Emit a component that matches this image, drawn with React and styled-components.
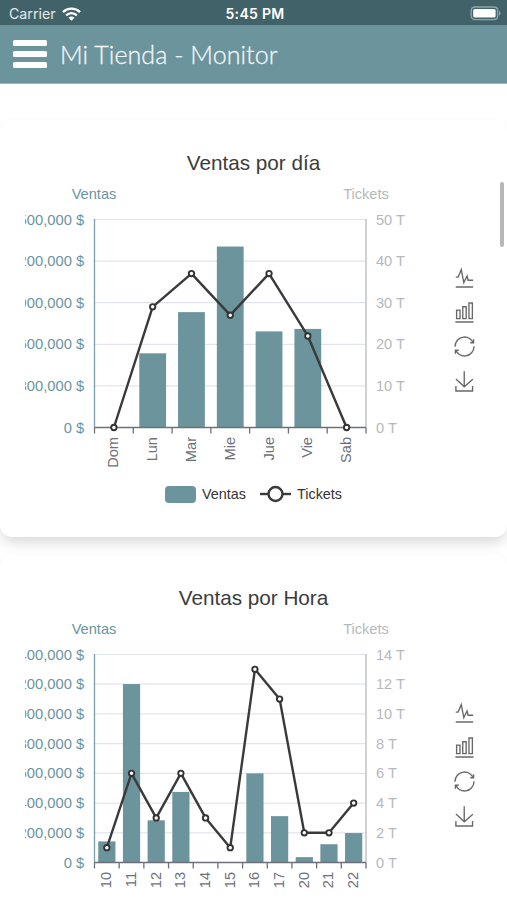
import React from "react";
import styled, { createGlobalStyle } from "styled-components";

const GlobalStyle = createGlobalStyle`
  body {
    margin: 0;
    background: #fff;
    font-family: "Liberation Sans", Arial, sans-serif;
  }
`;

const Screen = styled.div`
  position: relative;
  display: flex;
  flex-direction: column;
  height: 100vh;
  overflow: hidden;
`;

const StatusBar = styled.div`
  display: grid;
  grid-template-columns: 1fr auto 1fr;
  align-items: center;
  flex: none;
  height: 25px;
  padding: 2px 6px 0 9px;
  box-sizing: border-box;
  background: #426269;
  color: #fff;
  font-family: Inter, sans-serif;
  font-size: 14.2px;
`;

const Carrier = styled.span`
  display: flex;
  align-items: center;
  gap: 6px;
  color: #e3eaec;
`;

const Clock = styled.span`
  font-weight: 600;
  font-size: 14px;
  letter-spacing: 0.3px;
`;

const Battery = styled.span`
  justify-self: end;
  display: flex;
`;

const AppBar = styled.header`
  display: flex;
  align-items: center;
  flex: none;
  gap: 13px;
  height: 59px;
  padding: 0 13px 1px;
  box-sizing: border-box;
  background: #6b949d;
  border-bottom: 1px solid #9db8be;
`;

const MenuButton = styled.button`
  display: flex;
  flex-direction: column;
  justify-content: space-between;
  width: 34px;
  height: 28px;
  padding: 0;
  border: 0;
  background: none;
`;

const MenuLine = styled.span`
  height: 6px;
  border-radius: 1.5px;
  background: #fff;
`;

const AppTitle = styled.h1`
  margin: 0;
  padding-top: 1px;
  color: #f1f6f7;
  font-family: Lato, sans-serif;
  font-size: 25px;
  font-weight: 300;
  letter-spacing: 0.06px;
  -webkit-text-stroke: 0.3px #f1f6f7;
  white-space: nowrap;
`;

const Content = styled.main`
  display: flex;
  flex-direction: column;
  gap: 18px;
  padding-top: 36px;
`;

const Card = styled.section`
  flex: none;
  height: 417px;
  padding-top: 30px;
  box-sizing: border-box;
  border-radius: 12px;
  background: #fff;
  box-shadow: 0 7px 14px -2px rgba(0, 0, 0, 0.16);
`;

const CardTitle = styled.h2`
  margin: 0;
  color: #3c3c3c;
  font-size: 20.7px;
  font-weight: 400;
  line-height: 26px;
  text-align: center;
`;

const ChartRow = styled.div`
  display: flex;
  align-items: flex-start;
  justify-content: space-between;
  height: 300px;
  padding: 0 32px 0 25px;
`;

const Plot = styled.svg`
  display: block;
  overflow: hidden;
  font-size: 14.6px;
`;

const Toolbox = styled.div`
  display: flex;
  flex-direction: column;
  gap: 13.6px;
  padding-top: 91px;
`;

const ToolIcon = styled.svg`
  display: block;
  width: 21px;
  height: 21px;
  fill: none;
  stroke: #686868;
  stroke-width: 4;
`;

const Legend = styled.div`
  display: flex;
  align-items: center;
  justify-content: center;
  gap: 14px;
  height: 36px;
  color: #333;
  font-size: 14.4px;
`;

const LegendItem = styled.span`
  display: flex;
  align-items: center;
  gap: 6px;
`;

const Swatch = styled.span`
  width: 31px;
  height: 17px;
  border-radius: 4px;
  background: #6b949d;
`;

const ScrollThumb = styled.div`
  position: absolute;
  top: 182px;
  right: 3px;
  width: 4px;
  height: 65px;
  border-radius: 2px;
  background: #b8b8b8;
`;

const tools = [
  "M4.1,28.9h7.1l9.3-22l7.4,38l9.7-19.7l3,12.8h14.9M4.1,58h51.4",
  "M6.7,22.9h10V48h-10V22.9zM24.9,13h10v35h-10V13zM43.2,2h10v46h-10V2zM3.1,58h53.7",
  "M47,18.9h9.8V8.7M56.3,20.1C52.1,9,40.5,0.6,26.8,2.1C12.6,3.7,1.6,16.2,2.1,30.6M13,41.1H3.1v10.2M3.7,39.9c4.2,11.1,15.8,19.5,29.5,18c14.2-1.6,25.2-14.1,24.7-28.5",
  "M4.7,22.9L29.3,45.5L54.7,23.4M4.6,43.6L4.6,58L53.8,58L53.8,43.6M29.2,45.1L29.2,0",
];

const porDia = {
  title: "Ventas por día",
  maxVentas: 1500000,
  maxTickets: 50,
  steps: 5,
  barWidth: 26.8,
  data: [
    ["Dom", 0, 0],
    ["Lun", 535000, 29],
    ["Mar", 832000, 37],
    ["Mie", 1305000, 27],
    ["Jue", 693000, 37],
    ["Vie", 711000, 22],
    ["Sab", 0, 0],
  ],
};

const porHora = {
  title: "Ventas por Hora",
  maxVentas: 1400000,
  maxTickets: 14,
  steps: 7,
  barWidth: 17.2,
  data: [
    ["10", 142000, 1],
    ["11", 1201000, 6],
    ["12", 284000, 3],
    ["13", 475000, 6],
    ["14", 0, 3],
    ["15", 0, 1],
    ["16", 600000, 13],
    ["17", 312000, 11],
    ["20", 36000, 2],
    ["21", 123000, 2],
    ["22", 198000, 4],
  ],
};

const LEFT = 69.5;
const RIGHT = 341;
const TOP = 43.5;
const BOTTOM = 251.5;

const Chart = ({ maxVentas, maxTickets, steps, barWidth, data }) => {
  const band = (RIGHT - LEFT) / data.length;
  const height = BOTTOM - TOP;
  const center = (i) => LEFT + band * (i + 0.5);
  const ticketY = (t) => BOTTOM - (t / maxTickets) * height;
  const ticks = Array.from({ length: steps + 1 }, (_, i) => i / steps);

  return (
    <Plot width="400" height="300">
      <text x={LEFT - 0.5} y="23" textAnchor="middle" fill="#6b949d">Ventas</text>
      <text x={RIGHT} y="23" textAnchor="middle" fill="#b5b9bb">Tickets</text>

      {ticks.map((t) => {
        const y = BOTTOM - t * height;
        return (
          <g key={t}>
            <line x1={LEFT} x2={RIGHT} y1={y} y2={y} stroke="#e1e5ea" strokeWidth="1.2" />
            <text x="59.2" y={y + 5} textAnchor="end" fill="#6b949d" fontSize="14.75">
              {Math.round(t * maxVentas).toLocaleString("en-US")} $
            </text>
            <text x="351" y={y + 5} fill="#b5b9bb">{Math.round(t * maxTickets)} T</text>
          </g>
        );
      })}

      {data.map(([label, ventas], i) => {
        const h = (ventas / maxVentas) * height;
        return (
          <rect key={label} x={center(i) - barWidth / 2} y={BOTTOM - h} width={barWidth} height={h} fill="#6b949d" />
        );
      })}

      <line x1={LEFT} x2={LEFT} y1={TOP - 0.5} y2={BOTTOM} stroke="#7b9fa8" strokeWidth="1.3" />
      <line x1={RIGHT} x2={RIGHT} y1={TOP - 0.5} y2={BOTTOM} stroke="#b5b9bb" strokeWidth="1.3" />
      <line x1={LEFT} x2={RIGHT} y1={BOTTOM} y2={BOTTOM} stroke="#6e7079" strokeWidth="1.3" />
      {[...data, null].map((_, i) => (
        <line
          key={i}
          x1={LEFT + band * i}
          x2={LEFT + band * i}
          y1={BOTTOM}
          y2={BOTTOM + 6}
          stroke="#6e7079"
          strokeWidth="1.3"
        />
      ))}

      {data.map(([label], i) => (
        <text
          key={label}
          transform={`translate(${center(i) + 4.5} ${BOTTOM + 9.5}) rotate(-90)`}
          textAnchor="end"
          fill="#6e7079"
        >
          {label}
        </text>
      ))}

      <polyline
        points={data.map((d, i) => `${center(i)},${ticketY(d[2])}`).join(" ")}
        fill="none"
        stroke="#3a3a3a"
        strokeWidth="2.4"
        strokeLinejoin="bevel"
      />
      {data.map((d, i) => (
        <circle key={d[0]} cx={center(i)} cy={ticketY(d[2])} r="2.7" fill="#fff" stroke="#333" strokeWidth="1.9" />
      ))}
    </Plot>
  );
};

const ChartCard = ({ chart }) => (
  <Card>
    <CardTitle>{chart.title}</CardTitle>
    <ChartRow>
      <Chart {...chart} />
      <Toolbox>
        {tools.map((d) => (
          <ToolIcon key={d} viewBox="-1 -1 62 62">
            <path d={d} />
          </ToolIcon>
        ))}
      </Toolbox>
    </ChartRow>
    <Legend>
      <LegendItem>
        <Swatch />
        Ventas
      </LegendItem>
      <LegendItem>
        <svg width="31" height="18">
          <path d="M0 9h31" stroke="#3a3a3a" strokeWidth="2.4" />
          <circle cx="15.5" cy="9" r="7" fill="#fff" stroke="#3a3a3a" strokeWidth="2.4" />
        </svg>
        Tickets
      </LegendItem>
    </Legend>
  </Card>
);

const App = () => {
  return (
    <Screen>
      <GlobalStyle />
      <StatusBar>
        <Carrier>
          Carrier
          <svg width="19" height="14" viewBox="0 0 19 14" fill="none" stroke="#fff" strokeWidth="2.3">
            <path d="M1 5.1C5.8.5 13.2.5 18 5.1M4.2 8.3c3-2.9 7.6-2.9 10.6 0" />
            <path d="M9.5 13.8 6.5 10.7c1.7-1.5 4.3-1.5 6 0z" fill="#fff" stroke="none" />
          </svg>
        </Carrier>
        <Clock>5:45 PM</Clock>
        <Battery>
          <svg width="31" height="15" viewBox="0 0 31 15">
            <rect x="1.2" y="1" width="26.4" height="12.6" rx="3.4" fill="none" stroke="#91a5a9" strokeWidth="1.3" />
            <rect x="3.2" y="3" width="22.4" height="8.6" rx="1.5" fill="#fff" />
            <path d="M29 5v4.6c2-.7 2-3.9 0-4.6z" fill="#91a5a9" />
          </svg>
        </Battery>
      </StatusBar>
      <AppBar>
        <MenuButton aria-label="Menu">
          <MenuLine />
          <MenuLine />
          <MenuLine />
        </MenuButton>
        <AppTitle>Mi Tienda - Monitor</AppTitle>
      </AppBar>
      <Content>
        <ChartCard chart={porDia} />
        <ChartCard chart={porHora} />
      </Content>
      <ScrollThumb />
    </Screen>
  );
};

export default App;
